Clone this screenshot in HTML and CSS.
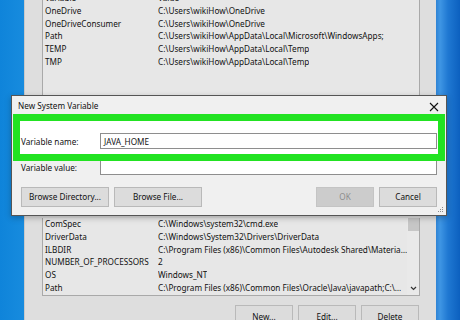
FILE: index.html
```html
<!DOCTYPE html>
<html lang="en">
<head>
  <meta charset="UTF-8">
  <title>New System Variable</title>
  <link rel="stylesheet" href="styles.css">
</head>
<body>
  <div class="desk">
    <div class="envWin">
      <div class="varList topList">
        <div class="rows">
          <div class="row"><span class="name">Variable</span><span class="val">Value</span></div>
          <div class="row"><span class="name">OneDrive</span><span class="val">C:\Users\wikiHow\OneDrive</span></div>
          <div class="row"><span class="name">OneDriveConsumer</span><span class="val">C:\Users\wikiHow\OneDrive</span></div>
          <div class="row"><span class="name">Path</span><span class="val">C:\Users\wikiHow\AppData\Local\Microsoft\WindowsApps;</span></div>
          <div class="row"><span class="name">TEMP</span><span class="val">C:\Users\wikiHow\AppData\Local\Temp</span></div>
          <div class="row"><span class="name">TMP</span><span class="val">C:\Users\wikiHow\AppData\Local\Temp</span></div>
        </div>
      </div>
      <div class="varList bottomList">
        <div class="rows">
          <div class="row"><span class="name">ComSpec</span><span class="val">C:\Windows\system32\cmd.exe</span></div>
          <div class="row"><span class="name">DriverData</span><span class="val">C:\Windows\System32\Drivers\DriverData</span></div>
          <div class="row"><span class="name">ILBDIR</span><span class="val">C:\Program Files (x86)\Common Files\Autodesk Shared\Materia…</span></div>
          <div class="row"><span class="name">NUMBER_OF_PROCESSORS</span><span class="val">2</span></div>
          <div class="row"><span class="name">OS</span><span class="val">Windows_NT</span></div>
          <div class="row"><span class="name">Path</span><span class="val">C:\Program Files (x86)\Common Files\Oracle\Java\javapath;C:\…</span></div>
        </div>
        <div class="scrollbar">
          <div class="thumb"></div>
          <svg class="chev" width="7" height="5" viewBox="0 0 7 5"><path d="M1 1 L3.5 3.5 L6 1" fill="none" stroke="#333" stroke-width="1.2"/></svg>
        </div>
      </div>
      <div class="winBtns">
        <div class="btn">New...</div>
        <div class="btn">Edit...</div>
        <div class="btn">Delete</div>
      </div>
    </div>

    <div class="dialog">
      <div class="titleBar">
        <span>New System Variable</span>
        <svg class="close" width="10" height="10" viewBox="0 0 10 10"><path d="M1 1 L9 9 M9 1 L1 9" stroke="#111" stroke-width="1.1"/></svg>
      </div>
      <div class="dlgBody">
        <div class="field hl">
          <label>Variable name:</label>
          <div class="input">JAVA_HOME</div>
        </div>
        <div class="field">
          <label>Variable value:</label>
          <div class="input"></div>
        </div>
        <div class="dlgBtns">
          <div class="btn wide">Browse Directory...</div>
          <div class="btn wide">Browse File...</div>
          <div class="spacer"></div>
          <div class="btn off">OK</div>
          <div class="btn">Cancel</div>
        </div>
      </div>
      <svg class="grip" width="6" height="6" viewBox="0 0 6 6"><g fill="#8a8a8a"><rect x="4" y="0" width="1" height="1"/><rect x="2" y="2" width="1" height="1"/><rect x="4" y="2" width="1" height="1"/><rect x="0" y="4" width="1" height="1"/><rect x="2" y="4" width="1" height="1"/><rect x="4" y="4" width="1" height="1"/></g></svg>
    </div>
  </div>
</body>
</html>
```

FILE: styles.css
```css
body{
  margin: 0;
  background: #1289dc;
}
.desk{
  position: relative;
  width: 460px;
  height: 320px;
  overflow: hidden;
  font-family: "Noto Sans", "Open Sans", sans-serif;
  font-size: 8.2px;
  color: #111;
  background: linear-gradient(90deg, #0f84da 0, #178bde 23px, #2b7fd0 435px, #3f96e4 440px, #1f78d2 448px, #0c60bf 460px);
}
.envWin{
  position: absolute;
  left: 24px;
  top: -9px;
  width: 378px;
  height: 340px;
  padding: 0 16px 0 17px;
  background: #dedede;
  border-left: 1px solid #c9c9c9;
  display: flex;
  flex-direction: column;
}
.varList{
  background: #e7e7e7;
  border: 1px solid #a9a9a9;
  display: flex;
}
.topList{
  height: 118px;
}
.bottomList{
  margin-top: 107px;
  border-top: none;
}
.rows{
  flex: 1;
  min-width: 0;
}
.row{
  height: 12.8px;
  line-height: 12.8px;
  display: flex;
  white-space: nowrap;
  padding-left: 2px;
}
.name{
  width: 113px;
  flex: none;
}
.val{
  overflow: hidden;
}
.scrollbar{
  width: 12px;
  display: flex;
  flex-direction: column;
  align-items: center;
  justify-content: space-between;
  background: #e9e9e9;
}
.thumb{
  width: 11px;
  height: 13px;
  background: #c6c6c6;
}
.chev{
  margin-bottom: 4px;
}
.winBtns{
  display: flex;
  justify-content: flex-end;
  gap: 5px;
  margin-top: 9px;
  padding-right: 1px;
}
.btn{
  height: 20px;
  line-height: 18px;
  text-align: center;
  background: #dcdcdc;
  border: 1px solid #b9b9b9;
  box-sizing: border-box;
}
.winBtns .btn{
  width: 58px;
  height: 24px;
  line-height: 12px;
  padding-top: 5px;
}

/* dialog */
.dialog{
  position: absolute;
  left: 11px;
  top: 95px;
  width: 434px;
  background: #f0f0f0;
  border: 1px solid #555;
  box-shadow: 0 2px 6px rgba(0,0,0,0.25);
}
.titleBar{
  height: 25px;
  display: flex;
  justify-content: space-between;
  align-items: flex-start;
  padding: 3px 6px 0 6px;
  box-sizing: border-box;
  line-height: 14px;
}
.close{
  margin-top: 3px;
  margin-right: 1px;
}
.dlgBody{
  padding: 0 9px 8px 9px;
}
.field{
  display: flex;
  align-items: center;
  margin-top: 5px;
}
.field label{
  width: 79px;
  flex: none;
}
.field.hl{
  margin: 0 -1px;
  padding: 12px 1px 5px 1px;
  background: #fff;
  outline: 7px solid #22e322;
  position: relative;
  z-index: 1;
}
.input{
  flex: 1;
  height: 16px;
  line-height: 15px;
  box-sizing: border-box;
  border: 1px solid #8e8e8e;
  background: #fff;
  padding-left: 3px;
}
.dlgBtns{
  display: flex;
  gap: 5px;
  margin-top: 12px;
}
.dlgBtns .btn{
  width: 58px;
}
.dlgBtns .wide{
  width: 88px;
}
.spacer{
  flex: 1;
}
.btn.off{
  background: #cccccc;
  border-color: #c4c4c4;
  color: #8c8c8c;
}
.grip{
  position: absolute;
  right: 2px;
  bottom: 2px;
}
```
